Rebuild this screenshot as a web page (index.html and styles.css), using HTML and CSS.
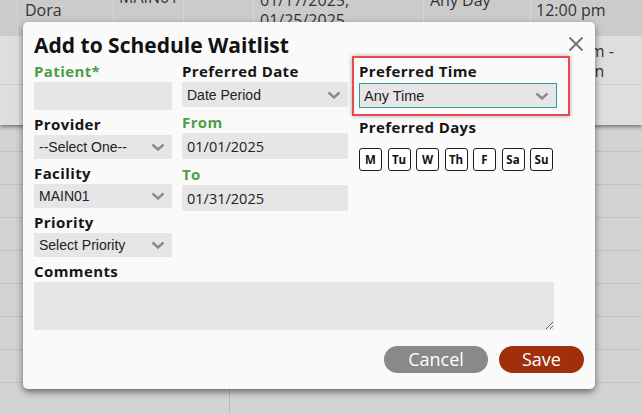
FILE: index.html
```html
<!DOCTYPE html>
<html>
<head>
<meta charset="utf-8">
<link rel="stylesheet" href="styles.css">
</head>
<body>
<div class="page">
  <div class="head">
    <div class="row r1">
      <div class="c c0"></div>
      <div class="c c1"><span class="t t-mid">Dora</span></div>
      <div class="c c2"><span class="t t-up">MAIN01</span></div>
      <div class="c c3"></div>
      <div class="c c4"><span class="t t-up2">01/17/2025,<br>01/25/2025</span></div>
      <div class="c c5"><span class="t t-up3">Any Day</span></div>
      <div class="c c6"><span class="t t-mid">12:00 pm</span></div>
    </div>
    <div class="row r2">
      <div class="c c0"></div>
      <div class="c c-fill"></div>
      <div class="c c6"><span class="t t-two">12:00 pm -<br><span class="narrow">Afternoon</span></span></div>
    </div>
    <div class="row r3">
      <div class="c c0"></div>
      <div class="c c-fill"></div>
    </div>
  </div>
  <div class="rows">
    <div class="brow first"><div class="bcell"></div></div>
    <div class="brow"><div class="bcell"></div></div>
    <div class="brow"><div class="bcell"></div></div>
    <div class="brow"><div class="bcell"></div></div>
    <div class="brow"><div class="bcell"></div></div>
    <div class="brow"><div class="bcell"></div></div>
    <div class="brow"><div class="bcell"></div></div>
    <div class="brow"><div class="bcell"></div></div>
    <div class="brow"><div class="bcell"></div></div>
  </div>

  <div class="dialog">
    <button class="close" aria-label="Close">
      <svg width="16" height="16" viewBox="0 0 16 16"><path d="M1.5 1.5 L14.5 14.5 M14.5 1.5 L1.5 14.5" stroke="#707070" stroke-width="1.8" fill="none"/></svg>
    </button>
    <h1 class="title">Add to Schedule Waitlist</h1>
    <div class="form-grid">
      <div class="col">
        <div class="group">
          <div class="label green">Patient*</div>
          <div class="field tall"></div>
        </div>
        <div class="group">
          <div class="label">Provider</div>
          <div class="field"><span>--Select One--</span><svg class="chev" width="14" height="8" viewBox="0 0 14 8"><polyline points="1.5,1.5 7,6.5 12.5,1.5" fill="none" stroke="#8a8a8a" stroke-width="2.4"/></svg></div>
        </div>
        <div class="group">
          <div class="label">Facility</div>
          <div class="field"><span>MAIN01</span><svg class="chev" width="14" height="8" viewBox="0 0 14 8"><polyline points="1.5,1.5 7,6.5 12.5,1.5" fill="none" stroke="#8a8a8a" stroke-width="2.4"/></svg></div>
        </div>
        <div class="group">
          <div class="label">Priority</div>
          <div class="field"><span>Select Priority</span><svg class="chev" width="14" height="8" viewBox="0 0 14 8"><polyline points="1.5,1.5 7,6.5 12.5,1.5" fill="none" stroke="#8a8a8a" stroke-width="2.4"/></svg></div>
        </div>
      </div>
      <div class="col col2">
        <div class="group">
          <div class="label">Preferred Date</div>
          <div class="field f25"><span>Date Period</span><svg class="chev" width="14" height="8" viewBox="0 0 14 8"><polyline points="1.5,1.5 7,6.5 12.5,1.5" fill="none" stroke="#8a8a8a" stroke-width="2.4"/></svg></div>
        </div>
        <div class="group">
          <div class="label green">From</div>
          <div class="field date">01/01/2025</div>
        </div>
        <div class="group">
          <div class="label green">To</div>
          <div class="field date">01/31/2025</div>
        </div>
      </div>
      <div class="col col3">
        <div class="highlight">
          <div class="label">Preferred Time</div>
          <div class="field f25 focused"><span>Any Time</span><svg class="chev" width="14" height="8" viewBox="0 0 14 8"><polyline points="1.5,1.5 7,6.5 12.5,1.5" fill="none" stroke="#8a8a8a" stroke-width="2.4"/></svg></div>
        </div>
        <div class="group days-group">
          <div class="label">Preferred Days</div>
          <div class="days">
            <span class="day">M</span>
            <span class="day">Tu</span>
            <span class="day">W</span>
            <span class="day">Th</span>
            <span class="day">F</span>
            <span class="day">Sa</span>
            <span class="day">Su</span>
          </div>
        </div>
      </div>
    </div>
    <div class="group comments">
      <div class="label">Comments</div>
      <textarea class="textarea"></textarea>
    </div>
    <div class="actions">
      <button class="btn cancel">Cancel</button>
      <button class="btn save">Save</button>
    </div>
  </div>
</div>
</body>
</html>
```

FILE: styles.css
```css
* { box-sizing: border-box; }
html, body { margin: 0; padding: 0; }
body {
  width: 642px;
  height: 414px;
  overflow: hidden;
  background: #d3d3d3;
  font-family: "Open Sans", "DejaVu Sans", sans-serif;
  color: #111;
}
.page { position: relative; width: 642px; height: 414px; overflow: hidden; }

/* background table */
.head { position: relative; z-index: 1; box-shadow: 0 2px 4px rgba(0,0,0,0.45); }
.row { display: flex; overflow: hidden; }
.r1 { height: 36px; background: #cbcbcb; }
.r2 { height: 49px; background: #dedede; border-bottom: 1px solid #cfcfcf; }
.r3 { height: 40px; background: #dedede; }
.c { flex: none; height: 100%; border-right: 1px solid #d8d8d8; }
.r2 .c, .r3 .c { border-right-color: #e6e6e6; }
.c0 { width: 18px; }
.c1 { width: 96px; padding-left: 7px; }
.c2 { width: 70px; padding-left: 5px; }
.c3 { width: 70px; }
.c4 { width: 170px; padding-left: 6px; }
.c5 { width: 107px; padding-left: 6px; }
.c6 { flex: 1; border-right: none; padding-left: 5px; }
.c-fill { width: 512px; border-right: none; }
.t { display: block; font-size: 16px; line-height: 18px; color: #333; white-space: nowrap; }
.t-mid { margin-top: 1px; }
.t-up { margin-top: -12px; }
.t-up2 { margin-top: -10px; line-height: 20px; }
.t-up3 { margin-top: -9px; }
.t-two { line-height: 20px; margin-top: 5px; }
.narrow { letter-spacing: -0.8px; }

.rows { position: relative; }
.brow { height: 33px; border-bottom: 1px solid #c2c2c2; display: flex; }
.brow.first { height: 27px; }
.bcell { width: 230px; height: 100%; border-right: 1px solid #b8b8b8; }

/* dialog */
.dialog {
  position: absolute;
  z-index: 2;
  left: 23px;
  top: 22px;
  width: 572px;
  padding: 11px 11px 16px 11px;
  background: #fafafa;
  border-radius: 5px;
  box-shadow: 0 3px 7px rgba(0,0,0,0.5);
}
.close {
  position: absolute;
  top: 14px;
  right: 11px;
  width: 16px;
  height: 16px;
  padding: 0;
  border: none;
  background: none;
  line-height: 0;
}
.title {
  margin: 0;
  font-size: 21px;
  line-height: 24px;
  font-weight: 700;
  color: #111;
}
.form-grid {
  display: grid;
  grid-template-columns: 138px 166px 198px;
  column-gap: 10px;
  align-items: start;
  margin-top: 6px;
}
.col { display: flex; flex-direction: column; gap: 6px; }
.col2 { gap: 7px; }
.col3 { padding-left: 1px; width: 199px; }
.label {
  font-size: 15px;
  line-height: 17px;
  font-weight: 700;
  letter-spacing: 0.4px;
  color: #151515;
  margin-bottom: 2px;
  white-space: nowrap;
}
.label.green { color: #4c9e45; }
.field {
  height: 24px;
  background: #e6e6e6;
  display: flex;
  align-items: center;
  justify-content: space-between;
  padding: 0 7px 0 5px;
  font-family: "Liberation Sans", Arial, sans-serif;
  font-size: 14px;
  color: #222;
  white-space: nowrap;
}
.field.tall { height: 28px; }
.field.f25 { height: 25px; }
.field.date {
  height: 26px;
  font-family: "Open Sans", sans-serif;
  font-size: 14.5px;
  color: #222;
}
.chev { flex: none; }
.highlight {
  margin: -7px -13px -8px -7px;
  padding: 5px 11px 6px 5px;
  border: 2px solid #e94a4f;
  box-shadow: 0 0 4px rgba(0,0,0,0.35);
}
.highlight .label { margin-bottom: 3px; }
.field.focused {
  border: 1px solid #2f9c9c;
  padding: 0 7px 0 4px;
  font-size: 14.5px;
}
.days-group { margin-top: 5px; }
.days-group .label { margin-bottom: 12px; }
.days {
  display: flex;
  justify-content: space-between;
  width: 194px;
}
.day {
  width: 23px;
  height: 23px;
  border: 1px solid #1e1e1e;
  border-radius: 3px;
  background: #fff;
  display: flex;
  align-items: center;
  justify-content: center;
  font-size: 11.5px;
  font-weight: 700;
  color: #111;
}
.comments { margin-top: 6px; }
.textarea {
  display: block;
  width: 520px;
  height: 48px;
  border: none;
  background: #e6e6e6;
  resize: vertical;
  margin: 0;
  padding: 4px;
  font-family: "Liberation Sans", sans-serif;
}
.actions {
  display: flex;
  justify-content: flex-end;
  gap: 11px;
  margin-top: 16px;
}
.btn {
  height: 27px;
  border: none;
  border-radius: 14px;
  color: #fff;
  font-family: "Open Sans", sans-serif;
  font-size: 18px;
  line-height: 27px;
  padding: 0;
}
.cancel { width: 104px; background: #898989; }
.save { width: 85px; background: #a22f0c; }
```
